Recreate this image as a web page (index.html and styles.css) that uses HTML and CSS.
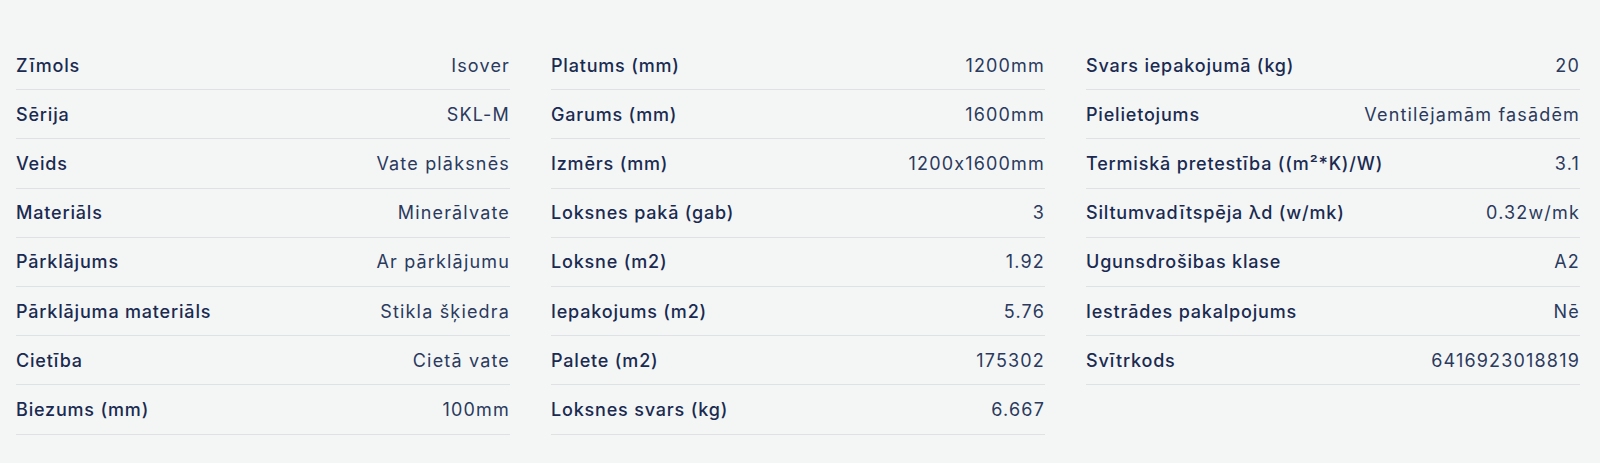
FILE: index.html
```html
<!DOCTYPE html>
<html lang="lv">
<head>
<meta charset="utf-8">
<title>Specifikācija</title>
<link rel="stylesheet" href="styles.css">
</head>
<body>
<div class="specs">
  <dl class="col">
    <div class="row"><dt>Zīmols</dt><dd>Isover</dd></div>
    <div class="row"><dt>Sērija</dt><dd>SKL-M</dd></div>
    <div class="row"><dt>Veids</dt><dd>Vate plāksnēs</dd></div>
    <div class="row"><dt>Materiāls</dt><dd>Minerālvate</dd></div>
    <div class="row"><dt>Pārklājums</dt><dd>Ar pārklājumu</dd></div>
    <div class="row"><dt>Pārklājuma materiāls</dt><dd>Stikla šķiedra</dd></div>
    <div class="row"><dt>Cietība</dt><dd>Cietā vate</dd></div>
    <div class="row"><dt>Biezums (mm)</dt><dd>100mm</dd></div>
  </dl>
  <dl class="col">
    <div class="row"><dt>Platums (mm)</dt><dd>1200mm</dd></div>
    <div class="row"><dt>Garums (mm)</dt><dd>1600mm</dd></div>
    <div class="row"><dt>Izmērs (mm)</dt><dd>1200x1600mm</dd></div>
    <div class="row"><dt>Loksnes pakā (gab)</dt><dd>3</dd></div>
    <div class="row"><dt>Loksne (m2)</dt><dd>1.92</dd></div>
    <div class="row"><dt>Iepakojums (m2)</dt><dd>5.76</dd></div>
    <div class="row"><dt>Palete (m2)</dt><dd>175302</dd></div>
    <div class="row"><dt>Loksnes svars (kg)</dt><dd>6.667</dd></div>
  </dl>
  <dl class="col">
    <div class="row"><dt>Svars iepakojumā (kg)</dt><dd>20</dd></div>
    <div class="row"><dt>Pielietojums</dt><dd>Ventilējamām fasādēm</dd></div>
    <div class="row"><dt>Termiskā pretestība ((m²*K)/W)</dt><dd>3.1</dd></div>
    <div class="row"><dt>Siltumvadītspēja λd (w/mk)</dt><dd>0.32w/mk</dd></div>
    <div class="row"><dt>Ugunsdrošibas klase</dt><dd>A2</dd></div>
    <div class="row"><dt>Iestrādes pakalpojums</dt><dd>Nē</dd></div>
    <div class="row"><dt>Svītrkods</dt><dd>6416923018819</dd></div>
  </dl>
</div>
</body>
</html>
```

FILE: styles.css
```css
html, body {
  margin: 0;
  padding: 0;
  background: #f4f6f6;
}
body {
  font-family: Inter, "Noto Sans", "DejaVu Sans", sans-serif;
  font-size: 18px;
  font-feature-settings: "calt" 0;
  color: #1c2b4f;
}
.specs {
  display: grid;
  grid-template-columns: repeat(3, 494px);
  column-gap: 41px;
  padding: 41px 20px 0 16px;
  align-items: start;
}
.col {
  margin: 0;
}
.row {
  display: flex;
  justify-content: space-between;
  align-items: center;
  height: 48.2px;
  border-bottom: 1px solid #dfe2e4;
}
dt {
  font-weight: 500;
  letter-spacing: 0.045em;
  color: #1a2a50;
}
dd {
  margin: 0;
  font-weight: 400;
  letter-spacing: 0.065em;
  color: #2b3a5d;
}
```
